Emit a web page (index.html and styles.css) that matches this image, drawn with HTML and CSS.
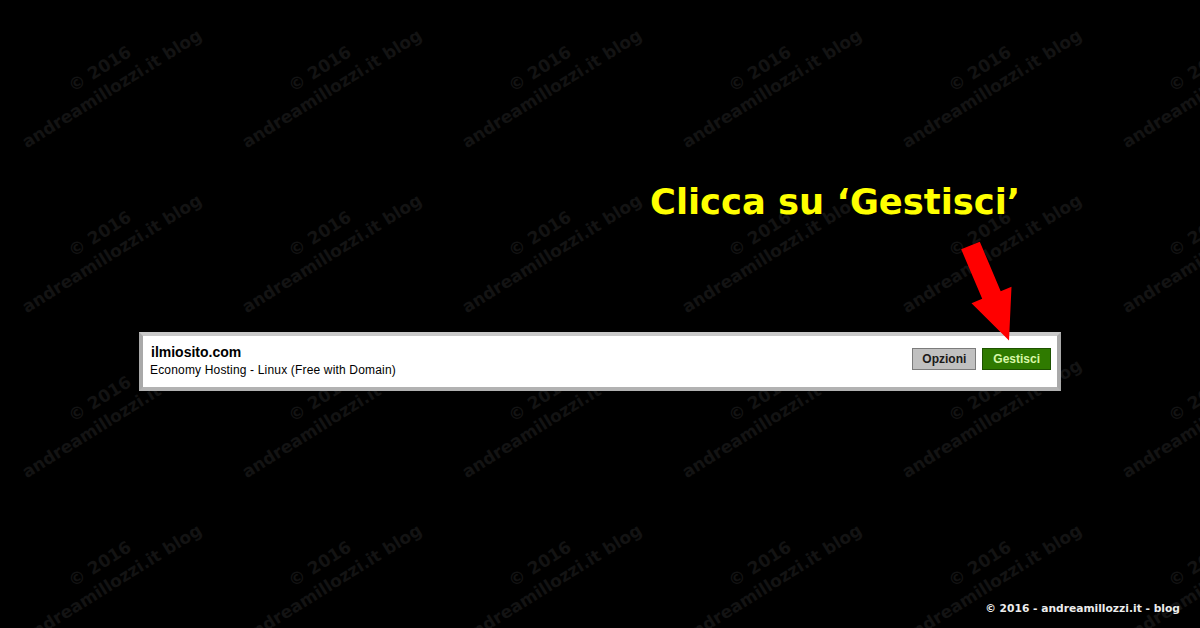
FILE: index.html
```html
<!DOCTYPE html>
<html lang="it">
<head>
<meta charset="utf-8">
<title>Clicca su Gestisci</title>
<link rel="stylesheet" href="styles.css">
</head>
<body>
<div class="page">
  <div class="watermarks" aria-hidden="true">
    <div class="wm"><div class="wm-text"><span>© 2016</span><span>andreamillozzi.it blog</span></div></div>
    <div class="wm"><div class="wm-text"><span>© 2016</span><span>andreamillozzi.it blog</span></div></div>
    <div class="wm"><div class="wm-text"><span>© 2016</span><span>andreamillozzi.it blog</span></div></div>
    <div class="wm"><div class="wm-text"><span>© 2016</span><span>andreamillozzi.it blog</span></div></div>
    <div class="wm"><div class="wm-text"><span>© 2016</span><span>andreamillozzi.it blog</span></div></div>
    <div class="wm"><div class="wm-text"><span>© 2016</span><span>andreamillozzi.it blog</span></div></div>
    <div class="wm"><div class="wm-text"><span>© 2016</span><span>andreamillozzi.it blog</span></div></div>
    <div class="wm"><div class="wm-text"><span>© 2016</span><span>andreamillozzi.it blog</span></div></div>
    <div class="wm"><div class="wm-text"><span>© 2016</span><span>andreamillozzi.it blog</span></div></div>
    <div class="wm"><div class="wm-text"><span>© 2016</span><span>andreamillozzi.it blog</span></div></div>
    <div class="wm"><div class="wm-text"><span>© 2016</span><span>andreamillozzi.it blog</span></div></div>
    <div class="wm"><div class="wm-text"><span>© 2016</span><span>andreamillozzi.it blog</span></div></div>
    <div class="wm"><div class="wm-text"><span>© 2016</span><span>andreamillozzi.it blog</span></div></div>
    <div class="wm"><div class="wm-text"><span>© 2016</span><span>andreamillozzi.it blog</span></div></div>
    <div class="wm"><div class="wm-text"><span>© 2016</span><span>andreamillozzi.it blog</span></div></div>
    <div class="wm"><div class="wm-text"><span>© 2016</span><span>andreamillozzi.it blog</span></div></div>
    <div class="wm"><div class="wm-text"><span>© 2016</span><span>andreamillozzi.it blog</span></div></div>
    <div class="wm"><div class="wm-text"><span>© 2016</span><span>andreamillozzi.it blog</span></div></div>
    <div class="wm"><div class="wm-text"><span>© 2016</span><span>andreamillozzi.it blog</span></div></div>
    <div class="wm"><div class="wm-text"><span>© 2016</span><span>andreamillozzi.it blog</span></div></div>
    <div class="wm"><div class="wm-text"><span>© 2016</span><span>andreamillozzi.it blog</span></div></div>
    <div class="wm"><div class="wm-text"><span>© 2016</span><span>andreamillozzi.it blog</span></div></div>
    <div class="wm"><div class="wm-text"><span>© 2016</span><span>andreamillozzi.it blog</span></div></div>
    <div class="wm"><div class="wm-text"><span>© 2016</span><span>andreamillozzi.it blog</span></div></div>
  </div>

  <h1 class="hint">Clicca su ‘Gestisci’</h1>

  <div class="panel">
    <div class="site">
      <div class="site-name">ilmiosito.com</div>
      <div class="site-plan">Economy Hosting - Linux (Free with Domain)</div>
    </div>
    <div class="actions">
      <button class="btn btn-options" type="button">Opzioni</button>
      <button class="btn btn-manage" type="button">Gestisci</button>
    </div>
  </div>

  <footer class="credit">© 2016 - andreamillozzi.it - blog</footer>

  <svg class="arrow" viewBox="950 235 70 110" width="70" height="110" aria-hidden="true">
    <polygon points="961.2,249.3 979.8,241.7 1000.7,291.2 1011.5,286.8 1009,340.5 971.5,303.2 982.2,298.8" fill="#ff0000"/>
  </svg>
</div>
</body>
</html>
```

FILE: styles.css
```css
* { box-sizing: border-box; }

html, body {
  margin: 0;
  padding: 0;
  background: #000;
}

.page {
  position: relative;
  width: 1200px;
  height: 628px;
  overflow: hidden;
  background: #000;
  display: flex;
  flex-direction: column;
}

.watermarks {
  position: absolute;
  left: -4px;
  top: -4px;
  display: grid;
  grid-template-columns: repeat(6, 220px);
  grid-template-rows: repeat(4, 165px);
  z-index: 0;
}

.wm {
  display: flex;
  align-items: center;
  justify-content: center;
}

.wm-text {
  display: flex;
  flex-direction: column;
  align-items: center;
  transform: rotate(-32deg);
  font-family: "DejaVu Sans", sans-serif;
  font-weight: bold;
  font-size: 17px;
  line-height: 23px;
  color: #131313;
  white-space: nowrap;
}

.hint {
  position: relative;
  z-index: 1;
  margin: 181px 0 0 650px;
  font-family: "DejaVu Sans", sans-serif;
  font-weight: bold;
  font-size: 35.3px;
  line-height: 42px;
  color: #ffff00;
  white-space: nowrap;
}

.panel {
  position: relative;
  z-index: 1;
  margin: 109px 0 0 139px;
  width: 922px;
  height: 59px;
  background: #fff;
  border-top: 4px solid #c9c9c9;
  border-left: 4px solid #a9a9a9;
  border-right: 4px solid #a9a9a9;
  border-bottom: 4px solid #b2b2b2;
  display: flex;
  justify-content: space-between;
  align-items: flex-start;
  padding: 8px 6px 0 8px;
  font-family: "Liberation Sans", Arial, sans-serif;
  color: #000;
}

.site-name {
  font-size: 14px;
  font-weight: bold;
  line-height: 17px;
}

.site-plan {
  font-size: 12px;
  letter-spacing: 0.17px;
  line-height: 17px;
  margin-top: 1px;
  margin-left: -1px;
}

.actions {
  display: flex;
  gap: 6px;
  margin-top: 4px;
}

.btn {
  height: 22px;
  margin: 0;
  font-family: "Liberation Sans", Arial, sans-serif;
  font-weight: bold;
  font-size: 12px;
  line-height: 20px;
  border-radius: 0;
}

.btn-options {
  padding: 0 9px;
  background: #c0c0c0;
  color: #1a1a1a;
  border: 1px solid #7c7c7c;
}

.btn-manage {
  padding: 0 10px;
  background: #2f7a00;
  color: #d8f7a8;
  border: 1px solid #1d5200;
}

.credit {
  position: relative;
  z-index: 1;
  margin-top: auto;
  align-self: flex-end;
  margin-right: 20px;
  margin-bottom: 12px;
  font-family: "DejaVu Sans", sans-serif;
  font-weight: bold;
  font-size: 10.7px;
  line-height: 14px;
  color: #ececec;
  white-space: nowrap;
}

.arrow {
  position: absolute;
  left: 950px;
  top: 235px;
  z-index: 2;
}
```
